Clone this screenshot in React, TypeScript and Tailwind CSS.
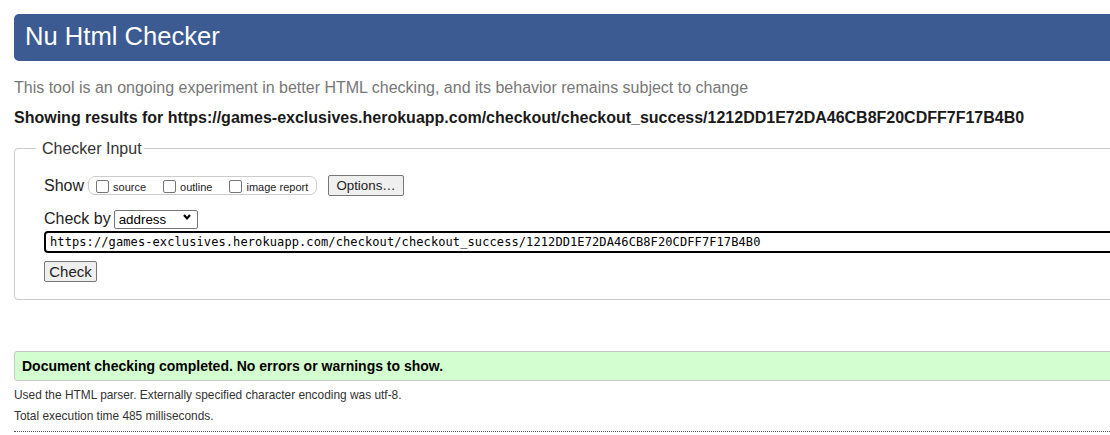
import { useState } from 'react';

const target =
  'https://games-exclusives.herokuapp.com/checkout/checkout_success/1212DD1E72DA46CB8F20CDFF7F17B4B0';

function Box({ label }: { label: string }) {
  return (
    <label className="inline-flex items-center mr-[16px] last:mr-0">
      <input
        type="checkbox"
        className="appearance-none w-[13px] h-[13px] border border-[#767676] rounded-[2px] bg-white ml-[1px] mr-[4px] mt-[1px]"
      />
      <span className="text-[11px] leading-[14px] mt-[3px]">{label}</span>
    </label>
  );
}

export default function App() {
  const [url, setUrl] = useState(target);

  return (
    <div
      className="w-[1110px] h-[435px] overflow-hidden bg-white text-[#222]"
      style={{ fontFamily: '"Liberation Sans", Arial, sans-serif' }}
    >
      <div className="w-[1160px] pl-[14px] pt-[14px]">
        <h1 className="h-[47px] bg-[#3b5b92] rounded-l-[5px] pl-[11px] flex items-center text-white text-[25.6px] leading-none pb-[1px]">
          Nu Html Checker
        </h1>

        <p className="mt-[17px] text-[16px] leading-[19px] text-[#777]">
          This tool is an ongoing experiment in better HTML checking, and its behavior remains subject to change
        </p>
        <p className="mt-[11px] text-[16px] leading-[19px] font-bold text-[#1a1a1a]">
          Showing results for {target}
        </p>

        <fieldset className="mt-[12px] border border-[#ccc] rounded-l-[4px] pl-[21px] pb-[17px]">
          <legend className="pl-[6px] pr-[2px] text-[16px] leading-[19px] text-[#333]">Checker Input</legend>
          <div className="pl-[8px] pt-[17px]">
            <div className="flex items-center h-[21px]">
              <span className="text-[16px] leading-[19px]">Show</span>
              <div className="ml-[4px] h-[19px] w-[229px] border border-[#ccc] rounded-[7px] flex items-center pl-[6px]">
                <Box label="source" />
                <Box label="outline" />
                <Box label="image report" />
              </div>
              <button className="ml-[11px] h-[21px] w-[76px] bg-[#efefef] border border-[#767676] rounded-[2px] text-[13.33px] leading-none">
                Options…
              </button>
            </div>

            <div className="flex items-center mt-[13px] h-[19px]">
              <span className="text-[16px] leading-[19px]">Check by</span>
              <div className="relative ml-[3px]">
                <select className="appearance-none h-[19px] w-[84px] bg-white border border-[#767676] rounded-[2px] pl-[4px] text-[13.33px] leading-none text-black">
                  <option>address</option>
                  <option>file upload</option>
                  <option>text input</option>
                </select>
                <svg
                  className="absolute right-[7px] top-[7px] pointer-events-none"
                  width="8"
                  height="6"
                  viewBox="0 0 8 6"
                >
                  <path d="M1 1 L4 4.4 L7 1" fill="none" stroke="#000" strokeWidth="2.2" />
                </svg>
              </div>
            </div>

            <input
              value={url}
              onChange={(e) => setUrl(e.target.value)}
              className="mt-[3px] block w-[1120px] h-[22px] border-2 border-black rounded-l-[4px] pl-[4px] text-[12px] tracking-[0.1px] text-black outline-none"
              style={{ fontFamily: '"DejaVu Sans Mono", Consolas, monospace' }}
            />

            <button className="mt-[8px] block h-[21px] w-[53px] bg-[#efefef] border border-[#767676] rounded-[2px] text-[15px] leading-none">
              Check
            </button>
          </div>
        </fieldset>

        <div className="mt-[51px] h-[30px] bg-[#d3fed0] border border-[#c8c8c8] rounded-l-[3px] pl-[7px] flex items-center">
          <span className="text-[14px] font-bold text-black">
            Document checking completed. No errors or warnings to show.
          </span>
        </div>

        <p className="mt-[5px] text-[11.9px] leading-[18px] text-[#333]">
          Used the HTML parser. Externally specified character encoding was utf-8.
        </p>
        <p className="mt-[3px] text-[11.9px] leading-[18px] text-[#333]">Total execution time 485 milliseconds.</p>
        <div className="mt-[6px] border-t border-dotted border-[#555]" />
      </div>
    </div>
  );
}
